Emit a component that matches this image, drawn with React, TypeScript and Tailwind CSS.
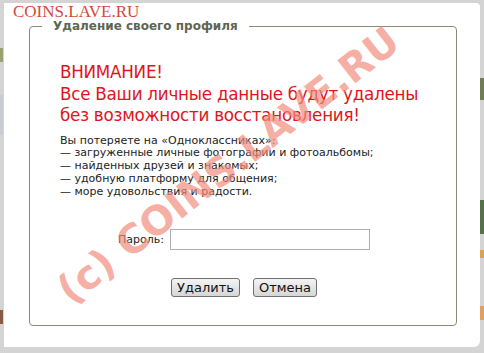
export default function App() {
  return (
    <div className="relative w-[484px] h-[353px] overflow-hidden bg-[#d4d4d4] pt-[3px] pl-[4px] font-['DejaVu_Sans',Verdana,sans-serif]">
      {/* edge fragments of the page behind */}
      <div className="absolute left-0 top-[48px] w-[3px] h-[14px] bg-[#9aa070]" />
      <div className="absolute left-0 top-[95px] w-[3px] h-[40px] bg-[#c9ccd2]" />
      <div className="absolute left-0 top-[310px] w-[3px] h-[14px] bg-[#8a5a44]" />
      <div className="absolute right-0 top-[78px] w-[4px] h-[22px] bg-[#6f7d56]" />
      <div className="absolute right-0 top-[200px] w-[4px] h-[34px] bg-[#55704a]" />
      <div className="absolute right-0 top-[250px] w-[4px] h-[8px] bg-[#d9a25a]" />
      <div className="absolute right-0 top-[306px] w-[4px] h-[14px] bg-[#e0a060]" />

      <div className="w-[476px] h-[344px] bg-white rounded-tr-[4px] rounded-br-[6px] pt-[16px] pl-[25px]">
        <fieldset className="w-[428px] h-[307px] border border-[#8c8a74] rounded-[4px]">
          <legend className="ml-[12px] px-[11px] text-[12px] leading-[15px] font-bold text-[#5e6651]">
            Удаление своего профиля
          </legend>
          <div className="flex flex-col pt-[28px] pl-[30px]">
            <div className="flex flex-col text-[16.75px] leading-[21.5px] tracking-[-0.25px] text-[#e0141b]">
              <span>ВНИМАНИЕ!</span>
              <span>Все Ваши личные данные будут удалены</span>
              <span>без возможности восстановления!</span>
            </div>
            <div className="flex flex-col mt-[8px] text-[11px] leading-[12.8px] text-[#222222]">
              <span>Вы потеряете на «Одноклассниках»:</span>
              <span>— загруженные личные фотографии и фотоальбомы;</span>
              <span>— найденных друзей и знакомых;</span>
              <span>— удобную платформу для общения;</span>
              <span>— море удовольствия и радости.</span>
            </div>
          </div>
          <div className="mt-[31px] flex items-center gap-[6px]">
            <div className="w-[134px] text-right text-[11px] text-[#222222]">Пароль:</div>
            <div className="w-[200px] h-[21px] border border-[#a9aeb5] bg-white" />
          </div>
          <div className="mt-[28px] flex justify-center gap-[13px] pl-[2px]">
            <button className="w-[69px] h-[19px] border border-[#707070] rounded-[3px] bg-gradient-to-b from-[#f4f4f4] to-[#d6d6d6] text-[13px] leading-[17px] text-[#111111]">
              Удалить
            </button>
            <button className="w-[64px] h-[19px] border border-[#707070] rounded-[3px] bg-gradient-to-b from-[#f4f4f4] to-[#d6d6d6] text-[13px] leading-[17px] text-[#111111]">
              Отмена
            </button>
          </div>
        </fieldset>
      </div>

      {/* watermarks */}
      <div className="absolute left-[13px] top-[2px] text-[17px] leading-[20px] text-[#d24a3a] font-['Liberation_Serif',serif] pointer-events-none">
        COINS.LAVE.RU
      </div>
      <div className="absolute left-[228px] top-[165px] -translate-x-1/2 -translate-y-1/2 rotate-[-38deg] whitespace-nowrap text-[40px] leading-[44px] font-bold text-[#f28c7c]/70 pointer-events-none">
        (c) COINS.LAVE.RU
      </div>
    </div>
  );
}
